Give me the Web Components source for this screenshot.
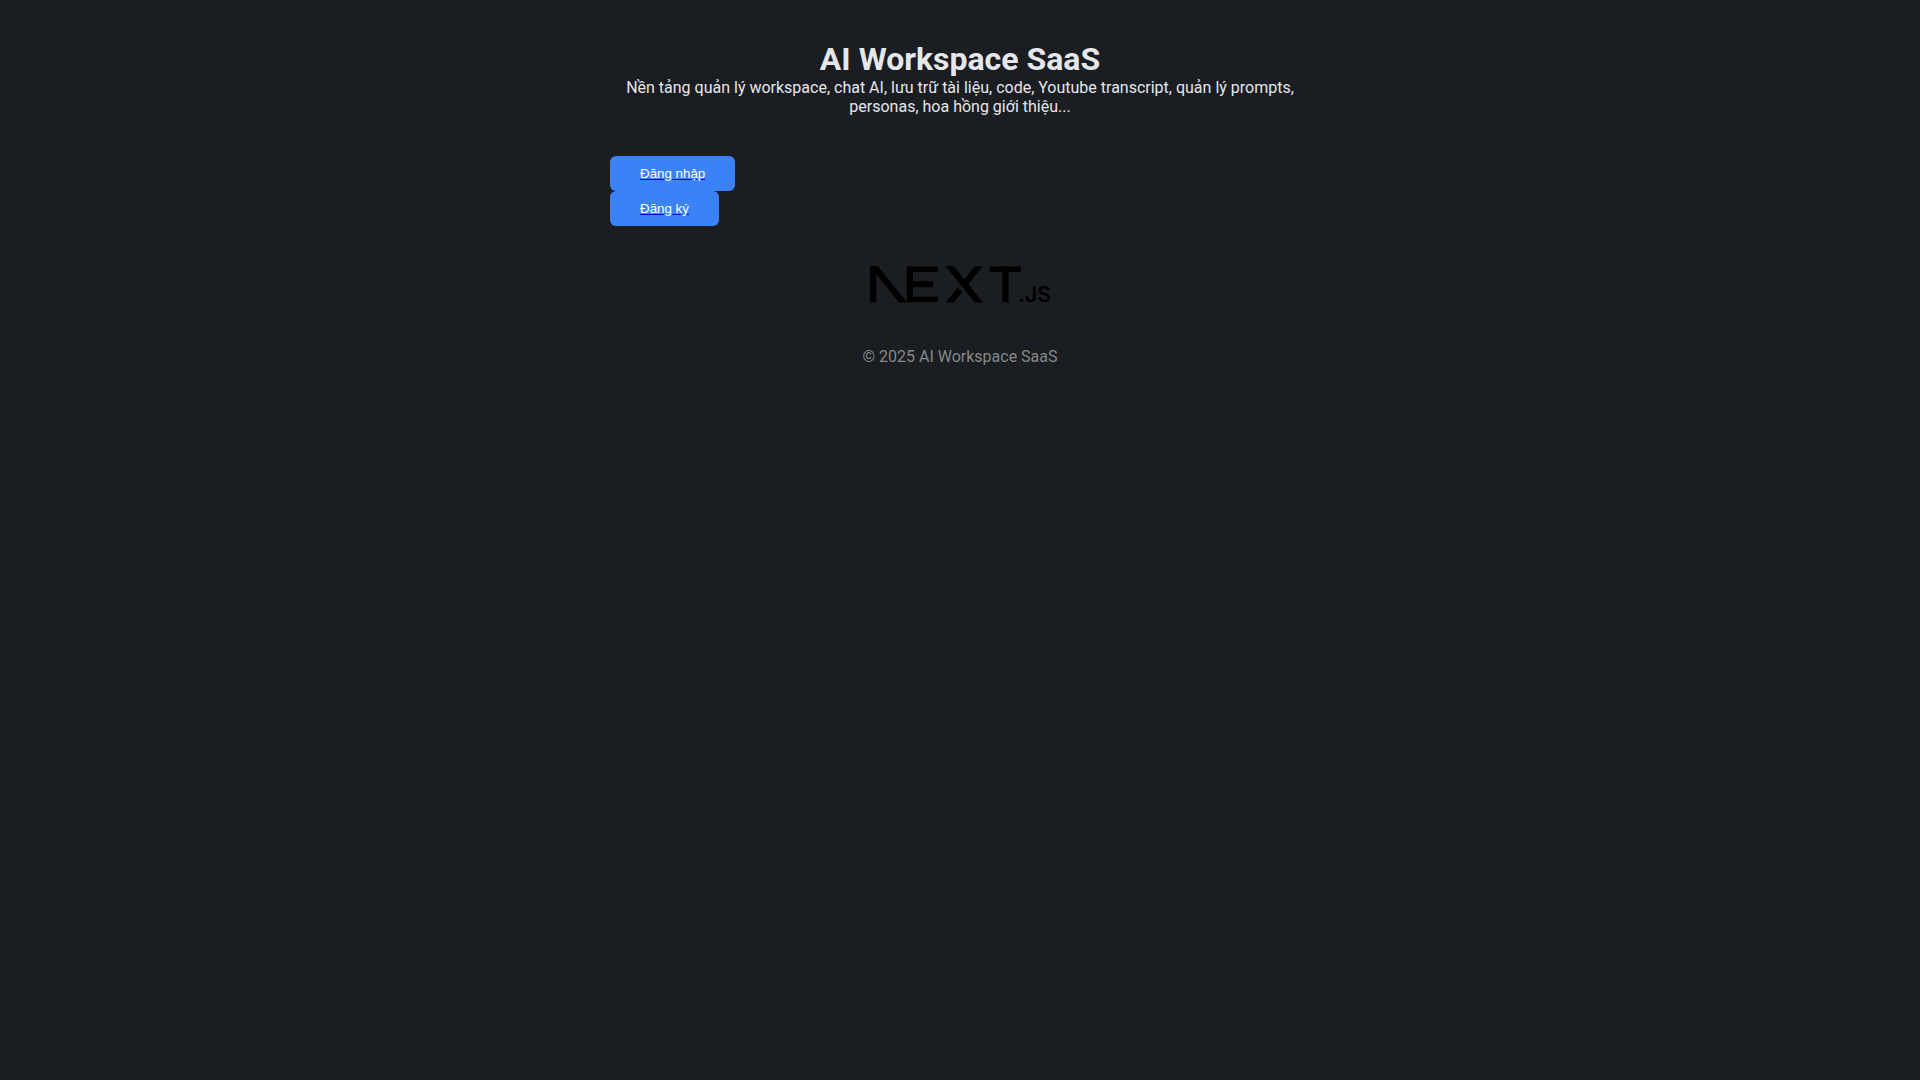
<!DOCTYPE html>
<html lang="vi">
<head>
<meta charset="utf-8">
<title>AI Workspace SaaS</title>
<style>
body { margin: 0; background: #1a1d21; color: #e5e7eb; font-family: Roboto, sans-serif; font-size: 16px; }
</style>
</head>
<body>
<landing-page>
  <page-hero slot="header" heading="AI Workspace SaaS">Nền tảng quản lý workspace, chat AI, lưu trữ tài liệu, code, Youtube transcript, quản lý prompts, personas, hoa hồng giới thiệu...</page-hero>
  <action-link to="#login">Đăng nhập</action-link>
  <action-link to="#register">Đăng ký</action-link>
  <next-logo slot="logo"></next-logo>
  <page-footer slot="footer">© 2025 AI Workspace SaaS</page-footer>
</landing-page>
<script>
const define = (name, html, setup) => customElements.define(name, class extends HTMLElement {
  connectedCallback() {
    if (this.shadowRoot) return;
    this.attachShadow({ mode: "open" }).innerHTML = html;
    if (setup) setup(this, this.shadowRoot);
  }
});

define("landing-page", `
<style>
:host { display: block; }
main { display: flex; flex-direction: column; gap: 40px; max-width: 700px; margin: 0 auto; padding: 40px 0; }
nav { display: flex; flex-direction: column; align-items: flex-start; }
.logo { display: flex; justify-content: center; }
</style>
<main>
  <slot name="header"></slot>
  <nav><slot></slot></nav>
  <div class="logo"><slot name="logo"></slot></div>
  <slot name="footer"></slot>
</main>`);

define("page-hero", `
<style>
:host { display: block; text-align: center; }
h1 { margin: 0; font-size: 32px; line-height: 38px; font-weight: 700; }
p { margin: 0; line-height: 19px; }
</style>
<header><h1></h1><p><slot></slot></p></header>`,
(el, root) => { root.querySelector("h1").textContent = el.getAttribute("heading"); });

define("action-link", `
<style>
:host { display: block; }
a { display: block; padding: 10px 30px; border-radius: 6px; background: #3b82f6; color: #fff;
  font-family: "Liberation Sans", Arial, sans-serif; font-size: smaller; line-height: 15px;
  text-decoration: underline #0000ee; }
</style>
<a><slot></slot></a>`,
(el, root) => { root.querySelector("a").setAttribute("href", el.getAttribute("to")); });

define("next-logo", `
<style>
:host { display: block; }
svg { display: block; width: 180px; height: 37px; overflow: visible; }
text { font-family: Inter, sans-serif; font-weight: 600; font-size: 46px; }
</style>
<svg viewBox="0 0 394 80" role="img" aria-label="Next.js">
  <clipPath id="cap"><rect width="394" height="79.4"/></clipPath>
  <g clip-path="url(#cap)" stroke="#000">
    <path stroke-width="13.6" d="M6.8 0V79.4"/>
    <path stroke-width="13.3" d="M0.4 -10 L80.6 89.4"/>
    <path stroke-width="13.6" d="M87.3 0V79.4"/>
    <path stroke-width="12.7" d="M81 6.35H149M81 39.4H138.3M81 73.05H149"/>
    <path stroke-width="13.9" d="M166.4 -10 L246.2 89.4M246.2 -10 L206.3 39.7M166.4 89.4 L197.1 51.2"/>
    <path stroke-width="12.7" d="M262 6.35H330.5"/>
    <path stroke-width="13.6" d="M296.5 0V79.4"/>
  </g>
  <text x="396" y="79" text-anchor="end">.JS</text>
</svg>`);

define("page-footer", `
<style>
:host { display: block; text-align: center; color: #888; line-height: 19px; padding-top: 4px; }
</style>
<footer><slot></slot></footer>`);
</script>
</body>
</html>
